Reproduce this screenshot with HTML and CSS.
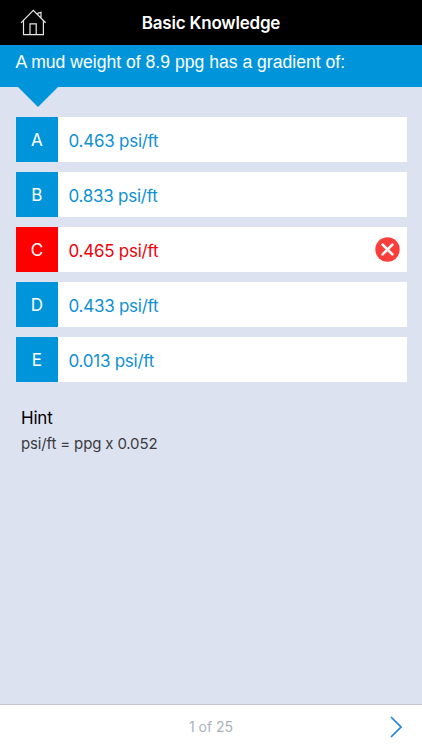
FILE: index.html
```
<!DOCTYPE html>
<html lang="en">

<head>
    <meta charset="UTF-8">
    <meta name="viewport" content="width=device-width, initial-scale=1.0">
    <title>Basic Knowledge</title>
    <link rel="stylesheet" href="styles.css">
</head>

<body>
    <header>
        <svg class="home" viewBox="0 0 26 27" width="26" height="27">
            <path d="M1 13.8 L13.3 1.3 L25.6 13.8 M3.5 11.5 V25.7 H23.4 V11.5 M10 25.7 V14.8 H16.2 V25.7 M18 6 V4.2 L21 3.4 V8.8" />
        </svg>
        <h1>Basic Knowledge</h1>
    </header>

    <div class="question">
        <p>A mud weight of 8.9 ppg has a gradient of:</p>
    </div>

    <main>
        <ul class="answers">
            <li><b>A</b><span>0.463 psi/ft</span></li>
            <li><b>B</b><span>0.833 psi/ft</span></li>
            <li class="wrong"><b>C</b><span>0.465 psi/ft</span>
                <svg class="cross" viewBox="0 0 25 25" width="25" height="25">
                    <circle cx="12.5" cy="12.5" r="12.2" />
                    <path d="M7.6 7.6 L17.4 17.4 M17.4 7.6 L7.6 17.4" />
                </svg>
            </li>
            <li><b>D</b><span>0.433 psi/ft</span></li>
            <li><b>E</b><span>0.013 psi/ft</span></li>
        </ul>

        <section class="hint">
            <h2>Hint</h2>
            <p>psi/ft = ppg x 0.052</p>
        </section>
    </main>

    <footer>
        <p>1 of 25</p>
        <svg class="next" viewBox="0 0 12 22" width="12" height="22">
            <path d="M1 1 L11 11 L1 21" />
        </svg>
    </footer>
</body>

</html>
```
FILE: styles.css
```
* {
    box-sizing: border-box;
    margin: 0;
    padding: 0;
}

body {
    display: flex;
    flex-direction: column;
    height: 100vh;
    background-color: #dde2f0;
    font-family: Inter, "Liberation Sans", sans-serif;
    overflow: hidden;
}

header {
    display: grid;
    grid-template-columns: 60px 1fr 60px;
    align-items: center;
    height: 45px;
    background-color: black;
    color: white;
}

.home {
    margin-left: 20px;
    fill: none;
    stroke: #e6e6e6;
    stroke-width: 1.2;
}

h1 {
    padding-top: 1px;
    font-size: 17px;
    font-weight: 600;
    letter-spacing: -0.2px;
    line-height: 44px;
    text-align: center;
}

.question {
    position: relative;
    height: 42px;
    padding: 6px 15.5px;
    background-color: #0095db;
    color: white;
    font-family: "Liberation Sans", Arial, sans-serif;
    font-size: 17.6px;
    line-height: 22px;
    white-space: nowrap;
}

/* arrow under the question */
.question::after {
    content: "";
    position: absolute;
    top: 100%;
    left: 17.5px;
    border: 20px solid transparent;
    border-top-color: #0095db;
    border-bottom: 0;
}

main {
    flex: 1;
    padding: 30px 15.5px 0;
}

.answers {
    display: flex;
    flex-direction: column;
    gap: 10px;
    list-style-type: none;
}

.answers li {
    display: flex;
    align-items: center;
    height: 45px;
    padding-right: 7px;
    background-color: white;
    color: #0d90d4;
    font-size: 17px;
    letter-spacing: -0.25px;
}

.answers b {
    width: 42.5px;
    margin-right: 10.5px;
    padding-top: 1px;
    background-color: #0095db;
    color: white;
    font-weight: 400;
    line-height: 44px;
    text-align: center;
}

.answers span {
    padding-top: 2px;
}

.answers .wrong {
    color: #f00008;
}

.answers .wrong b {
    background-color: #ff0000;
}

.cross {
    margin-left: auto;
    fill: #fa3e3c;
}

.cross path {
    stroke: white;
    stroke-width: 2.6;
    stroke-linecap: round;
}

.hint {
    padding: 24px 5.5px;
}

.hint h2 {
    color: black;
    font-size: 17px;
    font-weight: 400;
    letter-spacing: -0.2px;
    line-height: 24px;
}

.hint p {
    color: #3a3b40;
    font-size: 15px;
    letter-spacing: -0.15px;
    line-height: 28px;
}

footer {
    display: grid;
    grid-template-columns: 60px 1fr 60px;
    align-items: center;
    height: 46px;
    padding-bottom: 2px;
    border-top: 1px solid #c3c6cf;
    background-color: white;
}

footer p {
    grid-column: 2;
    color: #a9b2bc;
    font-size: 14px;
    text-align: center;
}

.next {
    margin-left: 28px;
    fill: none;
    stroke: #2383dc;
    stroke-width: 1.7;
}
```
